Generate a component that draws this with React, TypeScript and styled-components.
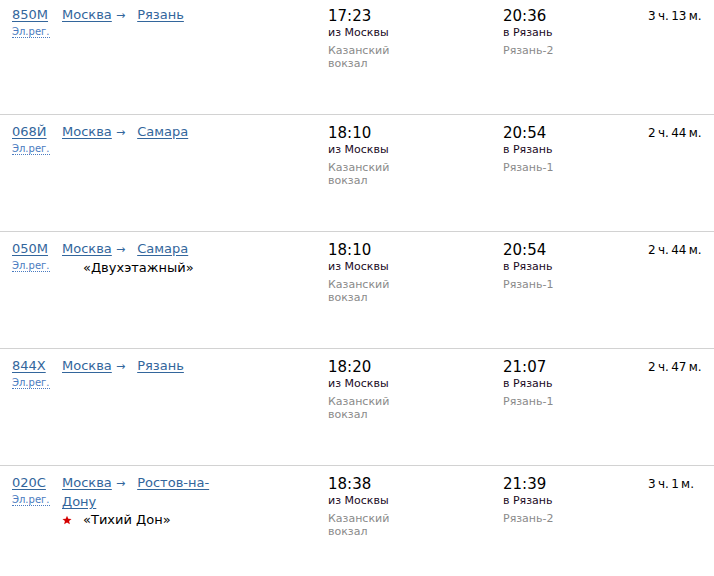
import React from 'react';
import styled, { createGlobalStyle } from 'styled-components';

const GlobalStyle = createGlobalStyle`
  html, body {
    margin: 0;
    padding: 0;
    background: #fff;
  }
  body {
    font-family: "DejaVu Sans", Verdana, sans-serif;
    color: #000;
  }
`

type Train = {
  number: string;
  from: string;
  to: string;
  name?: string;
  branded?: boolean;
  departure: string;
  departureCity: string;
  departureStation: string;
  arrival: string;
  arrivalCity: string;
  arrivalStation: string;
  duration: string;
}

const trains: Train[] = [
  {
    number: '850М', from: 'Москва', to: 'Рязань',
    departure: '17:23', departureCity: 'из Москвы', departureStation: 'Казанский вокзал',
    arrival: '20:36', arrivalCity: 'в Рязань', arrivalStation: 'Рязань-2',
    duration: '3 ч. 13 м.',
  },
  {
    number: '068Й', from: 'Москва', to: 'Самара',
    departure: '18:10', departureCity: 'из Москвы', departureStation: 'Казанский вокзал',
    arrival: '20:54', arrivalCity: 'в Рязань', arrivalStation: 'Рязань-1',
    duration: '2 ч. 44 м.',
  },
  {
    number: '050М', from: 'Москва', to: 'Самара', name: '«Двухэтажный»',
    departure: '18:10', departureCity: 'из Москвы', departureStation: 'Казанский вокзал',
    arrival: '20:54', arrivalCity: 'в Рязань', arrivalStation: 'Рязань-1',
    duration: '2 ч. 44 м.',
  },
  {
    number: '844Х', from: 'Москва', to: 'Рязань',
    departure: '18:20', departureCity: 'из Москвы', departureStation: 'Казанский вокзал',
    arrival: '21:07', arrivalCity: 'в Рязань', arrivalStation: 'Рязань-1',
    duration: '2 ч. 47 м.',
  },
  {
    number: '020С', from: 'Москва', to: 'Ростов-на-Дону', name: '«Тихий Дон»', branded: true,
    departure: '18:38', departureCity: 'из Москвы', departureStation: 'Казанский вокзал',
    arrival: '21:39', arrivalCity: 'в Рязань', arrivalStation: 'Рязань-2',
    duration: '3 ч. 1 м.',
  },
]

const List = styled.div`
  margin-top: -2px;
`

const Row = styled.div`
  display: grid;
  grid-template-columns: 50px 266px 175px 145px 1fr;
  min-height: 117px;
  box-sizing: border-box;
  padding: 8px 0 0 12px;
  border-bottom: 1px solid #d2d2d2;
`

const NumberCell = styled.div`
  display: flex;
  flex-direction: column;
  align-items: flex-start;
`

const Link = styled.a`
  color: #33669c;
  font-size: 13px;
  line-height: 18px;
  text-decoration: underline;
  text-underline-offset: 2px;
  cursor: pointer;
`

const TrainType = styled.span`
  margin-top: 2px;
  color: #4a7bc0;
  font-size: 10px;
  line-height: 11px;
  border-bottom: 1px dotted #4a7bc0;
`

const RouteCell = styled.div`
  font-size: 13px;
  line-height: 18px;
`

const RouteText = styled.div`
  width: 160px;
`

const Arrow = styled.span`
  margin-right: 12px;
  color: #33669c;
  font-size: 11px;
`

const NameLine = styled.div`
  display: flex;
  align-items: center;
  color: #000;
`

const StarSlot = styled.span`
  width: 21px;
  display: flex;
  align-items: center;
`

const TimeCell = styled.div`
  padding-top: 1px;
  display: flex;
  flex-direction: column;
`

const Time = styled.div`
  font-size: 15px;
  line-height: 18px;
  color: #000;
`

const City = styled.div`
  font-size: 11px;
  line-height: 15px;
  color: #1a0a1e;
`

const Station = styled.div`
  margin-top: 4px;
  max-width: 80px;
  font-size: 11px;
  line-height: 13px;
  color: #8a8a8a;
`

const Duration = styled.div`
  padding-top: 2px;
  font-size: 12px;
  line-height: 16px;
  word-spacing: -1.5px;
  white-space: nowrap;
  color: #000;
`

const Star = () => (
  <svg width="10" height="10" viewBox="0 0 24 24">
    <path d="M12 1.5l3.1 7.2 7.8.6-5.9 5.1 1.8 7.6L12 17.9 5.2 22l1.8-7.6L1.1 9.3l7.8-.6z" fill="#d40000"/>
  </svg>
)

const TrainRow = ({train}: {train: Train}) => (
  <Row>
    <NumberCell>
      <Link>{train.number}</Link>
      <TrainType>Эл.рег.</TrainType>
    </NumberCell>
    <RouteCell>
      <RouteText>
        <Link>{train.from}</Link> <Arrow>→</Arrow><Link>{train.to}</Link>
      </RouteText>
      {train.name &&
        <NameLine>
          <StarSlot>{train.branded && <Star/>}</StarSlot>
          {train.name}
        </NameLine>}
    </RouteCell>
    <TimeCell>
      <Time>{train.departure}</Time>
      <City>{train.departureCity}</City>
      <Station>{train.departureStation}</Station>
    </TimeCell>
    <TimeCell>
      <Time>{train.arrival}</Time>
      <City>{train.arrivalCity}</City>
      <Station>{train.arrivalStation}</Station>
    </TimeCell>
    <Duration>{train.duration}</Duration>
  </Row>
)

const App = () => (
  <>
    <GlobalStyle/>
    <List>
      {trains.map(train => <TrainRow key={train.number} train={train}/>)}
    </List>
  </>
)

export default App
